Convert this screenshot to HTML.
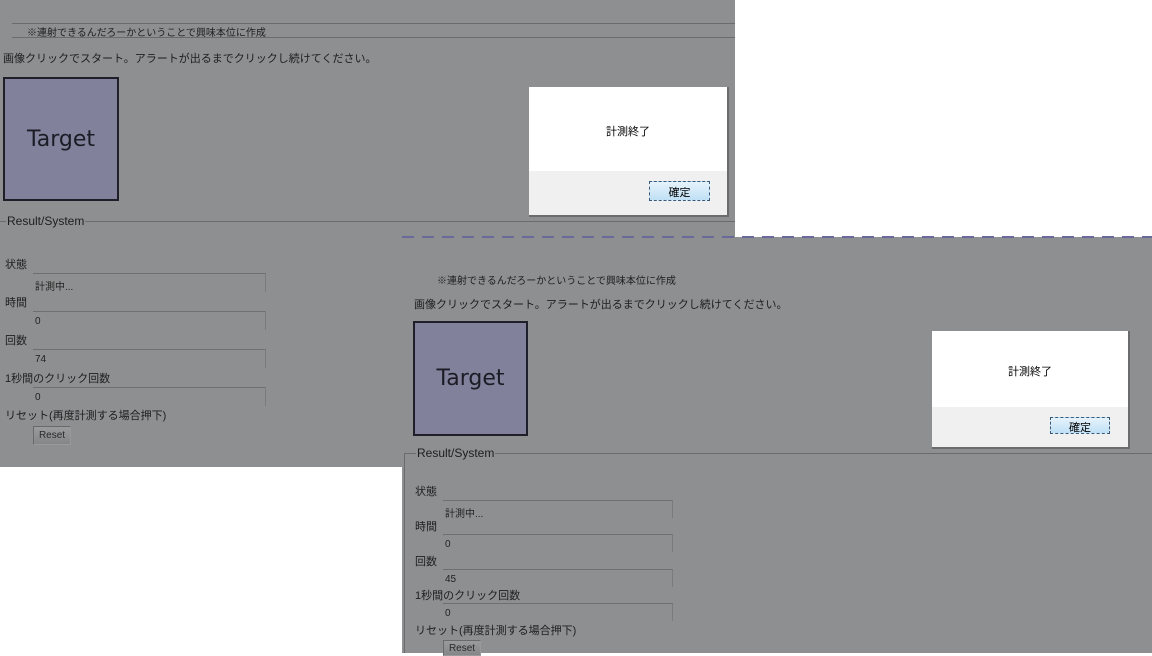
<!DOCTYPE html>
<html><head><meta charset="utf-8"><style>
*{margin:0;padding:0;box-sizing:border-box}
body{width:1152px;height:653px;background:#fff;position:relative;overflow:hidden;font-family:"Liberation Sans","Noto Sans CJK JP",sans-serif;color:#1e1e1e}
.g{position:absolute;background:#8e8f90}
.a{position:absolute;white-space:nowrap}
.t{font-size:11px}
.hl{position:absolute;height:1px;background:#6a6b6c}
.inp{position:absolute;height:19px;border-top:1px solid #6e6f70;border-right:1px solid #7a7b7c;font-size:10px;padding:4px 0 0 2px;color:#222}
.tgt{position:absolute;background:#81819b;border:2px solid #1f1f2a;font-size:22px;color:#1c1c26;display:flex;align-items:center;justify-content:center;font-family:"DejaVu Sans",sans-serif}
.btn{position:absolute;border:1px solid #6a6a6a;border-right-color:#9a9a9a;border-bottom-color:#9a9a9a;background:linear-gradient(#9a9b9c,#858687);font-size:10px;text-align:center;color:#2a2a2a}
.dlg{position:absolute;background:#fff;border-right:2px solid #6a6b6c;border-bottom:2px solid #6a6b6c}
.dlg .m{position:absolute;left:0;right:0;text-align:center;font-size:11px;color:#000}
.dlg .f{position:absolute;left:0;right:0;bottom:0;background:#f0f0f0}
.dlg .b{position:absolute;border:1px dashed #3a5a7a;background:linear-gradient(#e6f3fc,#bfe0f5);font-size:11px;text-align:center;color:#000}
</style></head><body>
<div class="g" style="left:0;top:0;width:735px;height:237px"></div>
<div class="g" style="left:0;top:237px;width:402px;height:230px"></div>
<div class="g" style="left:402px;top:237px;width:750px;height:416px"></div>
<div style="position:absolute;left:402px;top:236px;width:750px;height:2px;background:repeating-linear-gradient(90deg,#6a6a9a 0 12px,transparent 12px 20px)"></div>

<!-- top panel -->
<div class="hl" style="left:12px;top:23px;width:723px"></div>
<div class="hl" style="left:12px;top:37px;width:723px"></div>
<div class="a" style="left:27px;top:24px;font-size:10px">※連射できるんだろーかということで興味本位に作成</div>
<div class="a t" style="left:3px;top:50px">画像クリックでスタート。アラートが出るまでクリックし続けてください。</div>
<div class="tgt" style="left:3px;top:77px;width:116px;height:124px">Target</div>
<div class="hl" style="left:0;top:221px;width:735px"></div>
<div class="a" style="left:6px;top:214px;font-size:12px;background:#8e8f90;padding:0 1px">Result/System</div>
<div class="a t" style="left:5px;top:256px">状態</div>
<div class="inp" style="left:33px;top:273px;width:233px">計測中...</div>
<div class="a t" style="left:5px;top:294px">時間</div>
<div class="inp" style="left:33px;top:311px;width:233px">0</div>
<div class="a t" style="left:5px;top:332px">回数</div>
<div class="inp" style="left:33px;top:349px;width:233px">74</div>
<div class="a t" style="left:5px;top:370px">1秒間のクリック回数</div>
<div class="inp" style="left:33px;top:387px;width:233px">0</div>
<div class="a t" style="left:5px;top:407px">リセット(再度計測する場合押下)</div>
<div class="btn" style="left:33px;top:426px;width:38px;height:19px;padding-top:3px">Reset</div>
<div class="dlg" style="left:529px;top:87px;width:200px;height:130px">
 <div class="m" style="top:36px">計測終了</div>
 <div class="f" style="height:44px"><div class="b" style="left:120px;top:10px;width:61px;height:20px;padding-top:2px">確定</div></div>
</div>

<!-- bottom panel -->
<div class="a" style="left:437px;top:272px;font-size:10px">※連射できるんだろーかということで興味本位に作成</div>
<div class="a t" style="left:414px;top:296px">画像クリックでスタート。アラートが出るまでクリックし続けてください。</div>
<div class="tgt" style="left:413px;top:321px;width:115px;height:115px">Target</div>
<div class="hl" style="left:404px;top:453px;width:748px"></div>
<div class="hl" style="left:404px;top:453px;width:1px;height:200px"></div>
<div class="a" style="left:416px;top:446px;font-size:12px;background:#8e8f90;padding:0 1px">Result/System</div>
<div class="a t" style="left:415px;top:483px">状態</div>
<div class="inp" style="left:443px;top:500px;width:230px;height:18px">計測中...</div>
<div class="a t" style="left:415px;top:518px">時間</div>
<div class="inp" style="left:443px;top:534px;width:230px;height:18px">0</div>
<div class="a t" style="left:415px;top:553px">回数</div>
<div class="inp" style="left:443px;top:569px;width:230px;height:18px">45</div>
<div class="a t" style="left:415px;top:587px">1秒間のクリック回数</div>
<div class="inp" style="left:443px;top:603px;width:230px;height:18px">0</div>
<div class="a t" style="left:415px;top:622px">リセット(再度計測する場合押下)</div>
<div class="btn" style="left:443px;top:640px;width:38px;height:16px;padding-top:2px">Reset</div>
<div class="dlg" style="left:932px;top:331px;width:198px;height:118px">
 <div class="m" style="top:32px">計測終了</div>
 <div class="f" style="height:40px"><div class="b" style="left:118px;top:10px;width:60px;height:17px;padding-top:1px">確定</div></div>
</div>
</body></html>
